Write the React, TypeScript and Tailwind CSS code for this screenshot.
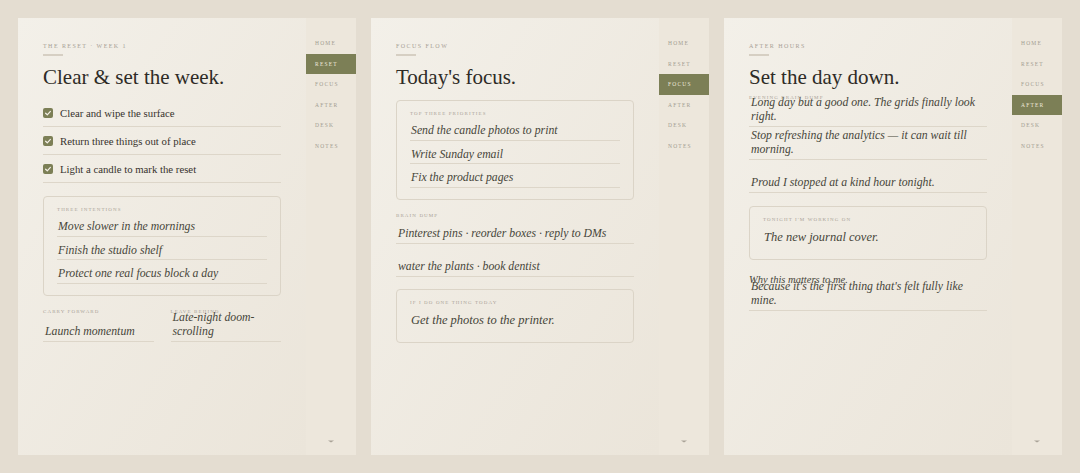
import React from "react";

const serif = { fontFamily: '"Liberation Serif", "Times New Roman", serif' };

const NAV = ["HOME", "RESET", "FOCUS", "AFTER", "DESK", "NOTES"];

function Sidebar({ active }: { active: string }) {
  return (
    <div className="w-[50px] h-[437px] bg-[#ede7dc] pt-[15px] flex flex-col">
      {NAV.map((n) => (
        <div
          key={n}
          className={
            n === active
              ? "h-[20.5px] flex items-center pl-[9px] bg-[#7c7f56] text-[#efe9dc] text-[5.5px] tracking-[0.22em]"
              : "h-[20.5px] flex items-center pl-[9px] text-[#a39d92] text-[5.5px] tracking-[0.22em]"
          }
        >
          {n}
        </div>
      ))}
      <div className="mt-auto pb-[12px] flex justify-center">
        <svg width="6" height="3" viewBox="0 0 6 3">
          <polygon points="0,0.5 6,0.5 3,2.5" fill="#aaa397" />
        </svg>
      </div>
    </div>
  );
}

function Eyebrow({ text }: { text: string }) {
  return (
    <>
      <div className="text-[6px] leading-[8px] tracking-[0.24em] text-[#a8a196] uppercase">{text}</div>
      <div className="mt-[4px] w-[20px] h-[2px] bg-[#d6cfc3]" />
    </>
  );
}

function Heading({ text }: { text: string }) {
  return <div className="mt-[8px] text-[21px] leading-[26px] text-[#2e2b26]">{text}</div>;
}

function Label({ text }: { text: string }) {
  return (
    <div className="relative text-[5px] leading-[6px] tracking-[0.22em] text-[#aaa398] uppercase">{text}</div>
  );
}

function Field({ text }: { text: string }) {
  return (
    <div className="h-[33px] flex flex-col justify-end pb-[2px] pl-[2px] border-b border-[#ddd6c9] text-[11.75px] leading-[14px] italic text-[#47463a]">
      {text}
    </div>
  );
}

function ListBox({ label, items }: { label: string; items: string[] }) {
  return (
    <div className="border border-[#dbd4c7] rounded-[4px] pt-[10px] px-[13px] pb-[11.5px]">
      <Label text={label} />
      {items.map((t) => (
        <div
          key={t}
          className="h-[23.5px] flex items-end pb-[1.5px] pl-[1px] border-b border-[#ddd6c9] text-[11.75px] leading-[14px] italic text-[#47463a]"
        >
          {t}
        </div>
      ))}
    </div>
  );
}

function OneBox({ label, text }: { label: string; text: string }) {
  return (
    <div className="border border-[#dbd4c7] rounded-[4px] pt-[10px] px-[13px] pb-[14px]">
      <Label text={label} />
      <div className="mt-[6px] pl-[1px] text-[12.5px] leading-[16px] italic text-[#47463a]">{text}</div>
    </div>
  );
}

function Check() {
  return (
    <div className="w-[10px] h-[10px] rounded-[2px] bg-[#7c7f56] flex items-center justify-center shrink-0">
      <svg width="8" height="8" viewBox="0 0 8 8">
        <polyline points="1.6,4.2 3.3,5.8 6.4,2.4" fill="none" stroke="#f4f0e6" strokeWidth="1.2" strokeLinecap="round" strokeLinejoin="round" />
      </svg>
    </div>
  );
}

function Panel({ active, children }: { active: string; children: React.ReactNode }) {
  return (
    <div className="w-[338px] h-[437px] flex">
      <div className="w-[288px] h-[437px] bg-linear-to-br from-[#f3f0e9] to-[#ebe5da] pt-[24px] px-[25px] flex flex-col">
        {children}
      </div>
      <Sidebar active={active} />
    </div>
  );
}

export default function App() {
  return (
    <div className="w-[1080px] h-[473px] bg-[#e4ddd1] p-[18px] flex gap-[15px]" style={serif}>
      <Panel active="RESET">
        <Eyebrow text="The Reset · Week 1" />
        <Heading text="Clear & set the week." />
        <div className="mt-[9px]">
          {["Clear and wipe the surface", "Return three things out of place", "Light a candle to mark the reset"].map((t) => (
            <div key={t} className="h-[28px] flex items-center gap-[7px] border-b border-[#ddd6c9]">
              <Check />
              <span className="text-[10.75px] leading-[14px] pt-[1px] text-[#37332e]">{t}</span>
            </div>
          ))}
        </div>
        <div className="mt-[13px]">
          <ListBox
            label="Three intentions"
            items={["Move slower in the mornings", "Finish the studio shelf", "Protect one real focus block a day"]}
          />
        </div>
        <div className="mt-[13px] grid grid-cols-2 gap-[17px]">
          <div>
            <Label text="Carry forward" />
            <div className="-mt-[6px]">
              <Field text="Launch momentum" />
            </div>
          </div>
          <div>
            <Label text="Leave behind" />
            <div className="-mt-[6px]">
              <Field text="Late-night doom-scrolling" />
            </div>
          </div>
        </div>
      </Panel>

      <Panel active="FOCUS">
        <Eyebrow text="Focus flow" />
        <Heading text="Today's focus." />
        <div className="mt-[10px]">
          <ListBox
            label="Top three priorities"
            items={["Send the candle photos to print", "Write Sunday email", "Fix the product pages"]}
          />
        </div>
        <div className="mt-[13px]">
          <Label text="Brain dump" />
          <div className="-mt-[8px]">
            <Field text="Pinterest pins · reorder boxes · reply to DMs" />
            <Field text="water the plants · book dentist" />
          </div>
        </div>
        <div className="mt-[12px]">
          <OneBox label="If I do one thing today" text="Get the photos to the printer." />
        </div>
      </Panel>

      <Panel active="AFTER">
        <Eyebrow text="After hours" />
        <Heading text="Set the day down." />
        <div className="mt-[5px]">
          <Label text="Evening brain dump" />
          <div className="-mt-[7px]">
            <Field text="Long day but a good one. The grids finally look right." />
            <Field text="Stop refreshing the analytics — it can wait till morning." />
            <Field text="Proud I stopped at a kind hour tonight." />
          </div>
        </div>
        <div className="mt-[12.5px]">
          <OneBox label="Tonight I'm working on" text="The new journal cover." />
        </div>
        <div className="mt-[14px]">
          <div className="relative text-[10.5px] leading-[12px] italic text-[#47463a]">Why this matters to me.</div>
          <div className="-mt-[8px]">
            <Field text="Because it's the first thing that's felt fully like mine." />
          </div>
        </div>
      </Panel>
    </div>
  );
}
